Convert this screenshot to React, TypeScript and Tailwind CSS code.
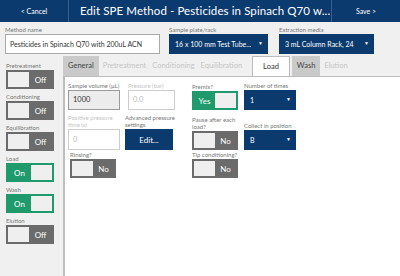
import React from "react";

const font = { fontFamily: "Lato, 'Open Sans', 'Noto Sans', sans-serif" };

function Toggle({ on, onText, offText, w = "w-[46px]" }: { on: boolean; onText: string; offText: string; w?: string }) {
	if (on) {
		return (
			<div className={`flex items-center ${w} h-[19px] bg-[#1f9a6c] p-[2px]`}>
				<span className="flex-1 text-center text-[8px] text-white">{onText}</span>
				<span className="w-[21px] h-full bg-[#efefef]" />
			</div>
		);
	}
	return (
		<div className={`flex items-center ${w} h-[19px] bg-[#6b6b6b] p-[2px]`}>
			<span className="w-[21px] h-full bg-[#efefef]" />
			<span className="flex-1 text-center text-[8px] text-white">{offText}</span>
		</div>
	);
}

function Label({ children, muted }: { children: React.ReactNode; muted?: boolean }) {
	return <div className={`text-[6px] leading-[7px] mb-[1px] whitespace-nowrap ${muted ? "text-[#c4c4c4]" : "text-[#777]"}`}>{children}</div>;
}

function Select({ value, w }: { value: string; w: string }) {
	return (
		<div className={`flex items-center justify-between h-[20px] bg-[#0b3a6f] text-white text-[7px] pl-[6px] pr-[5px] ${w}`}>
			<span className="whitespace-nowrap overflow-hidden">{value}</span>
			<span className="text-[5px] ml-[4px] shrink-0">▼</span>
		</div>
	);
}

const steps = [
	{ name: "Pretreatment", on: false },
	{ name: "Conditioning", on: false },
	{ name: "Equilibration", on: false },
	{ name: "Load", on: true },
	{ name: "Wash", on: true },
	{ name: "Elution", on: false },
];

const tabs = [
	{ name: "General", kind: "gray" },
	{ name: "Pretreatment", kind: "off" },
	{ name: "Conditioning", kind: "off" },
	{ name: "Equilibration", kind: "off" },
	{ name: "Load", kind: "active" },
	{ name: "Wash", kind: "gray" },
	{ name: "Elution", kind: "off" },
];

export default function App() {
	return (
		<div className="w-[400px] h-[276px] overflow-hidden bg-[#f0f0f0] flex flex-col" style={font}>
			<div className="flex h-[22px] bg-[#0b3a6f] text-white shrink-0">
				<div className="w-[69px] flex items-center justify-center text-[7px] border-r border-[#3a5f8c]">&lt; Cancel</div>
				<div className="flex-1 min-w-0 flex items-center pl-[11px] text-[11.5px] tracking-[0.1px] whitespace-nowrap overflow-hidden">
					Edit SPE Method - Pesticides in Spinach Q70 w...
				</div>
				<div className="w-[69px] flex items-center justify-center text-[7px] border-l border-[#3a5f8c]">Save &gt;</div>
			</div>

			<div className="flex items-start gap-[9px] px-[5px] pt-[4px] h-[34px] shrink-0">
				<div>
					<Label>Method name</Label>
					<div className="w-[155px] h-[20px] bg-white border border-[#aaa] flex items-center px-[4px] text-[7px] text-[#333] whitespace-nowrap overflow-hidden">
						Pesticides in Spinach Q70 with 200uL ACN
					</div>
				</div>
				<div>
					<Label>Sample plate/rack</Label>
					<Select value="16 x 100 mm Test Tube..." w="w-[99px]" />
				</div>
				<div className="ml-[2px]">
					<Label>Extraction media</Label>
					<Select value="3 mL Column Rack, 24" w="w-[95px]" />
				</div>
			</div>

			<div className="flex flex-1 min-h-0">
				<div className="w-[63px] shrink-0 pl-[6px] pt-[6px] flex flex-col gap-[4px]">
					{steps.map((s) => (
						<div key={s.name}>
							<Label>{s.name}</Label>
							<Toggle on={s.on} onText="On" offText="Off" w="w-[48px]" />
						</div>
					))}
				</div>

				<div className="flex-1 flex flex-col">
					<div className="flex h-[20px] items-end">
						{tabs.map((t) => (
							<div
								key={t.name}
								className={`h-[20px] flex items-center text-[7.5px] mr-[2px] ${
									t.kind === "gray"
										? "bg-[#cacaca] text-[#444] px-[5px]"
										: t.kind === "active"
										? "bg-white text-[#333] border border-b-0 border-[#bbb] px-[10px] h-[21px] -mb-px ml-[6px]"
										: "text-[#c6c6c6] px-[2px]"
								}`}
							>
								{t.name}
							</div>
						))}
					</div>
					<div className="flex-1 bg-white border-l-2 border-t border-[#bdbdbd] pl-[3px] pt-[5px]">
						<div className="grid grid-cols-[52px_62px_47px_52px] gap-x-[5px] items-end">
							<div>
								<Label>Sample volume (µL)</Label>
								<div className="h-[20px] bg-[#ececec] border border-[#999] flex items-center px-[4px] text-[7.5px] text-[#333]">1000</div>
							</div>
							<div className="pl-[3px]">
								<Label muted>Pressure (bar)</Label>
								<div className="h-[20px] w-[47px] bg-white border border-[#ccc] flex items-center px-[4px] text-[7.5px] text-[#bbb]">0.0</div>
							</div>
							<div>
								<Label>Premix?</Label>
								<Toggle on onText="Yes" offText="No" />
							</div>
							<div>
								<Label>Number of times</Label>
								<Select value="1" w="w-[52px]" />
							</div>

							<div className="pt-[4px]">
								<Label muted>
									Positive pressure
									<br />
									time (s)
								</Label>
								<div className="h-[21px] bg-white border border-[#ccc] flex items-center px-[4px] text-[7.5px] text-[#bbb]">0</div>
							</div>
							<div className="pt-[4px]">
								<Label>
									Advanced pressure
									<br />
									settings
								</Label>
								<div className="h-[21px] w-[48px] bg-[#0b3a6f] text-white text-[8px] flex items-center justify-center">Edit...</div>
							</div>
							<div className="pt-[4px]">
								<Label>
									Pause after each
									<br />
									load?
								</Label>
								<Toggle on={false} onText="Yes" offText="No" />
							</div>
							<div className="pt-[4px]">
								<Label>Collect in position</Label>
								<Select value="B" w="w-[52px]" />
							</div>

							<div className="pl-[2px] pt-[1px]">
								<Label>Rinsing?</Label>
								<Toggle on={false} onText="Yes" offText="No" />
							</div>
							<div />
							<div className="pt-[1px]">
								<Label>Tip conditioning?</Label>
								<Toggle on={false} onText="Yes" offText="No" />
							</div>
							<div />
						</div>
					</div>
				</div>
			</div>
		</div>
	);
}
